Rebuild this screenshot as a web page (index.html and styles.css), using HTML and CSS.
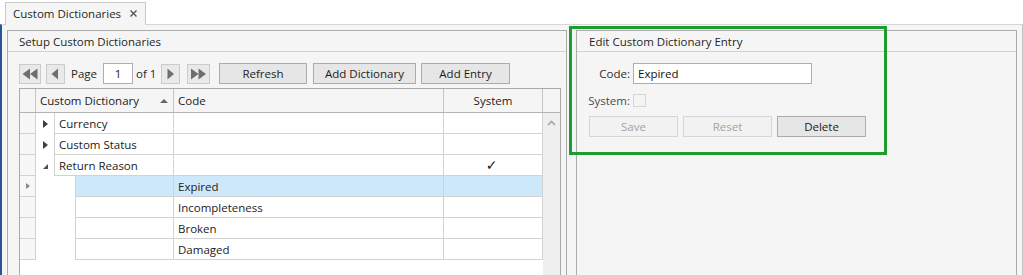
FILE: index.html
```html
<!DOCTYPE html>
<html>
<head>
<meta charset="utf-8">
<title>Custom Dictionaries</title>
<link rel="stylesheet" href="styles.css">
</head>
<body>
<div class="app">
  <div class="tabstrip">
    <div class="tab">
      <span class="tab-title">Custom Dictionaries</span>
      <svg class="tab-close" width="7" height="7" viewBox="0 0 7 7"><path d="M0.5 0.5 L6.5 6.5 M6.5 0.5 L0.5 6.5" stroke="#555" stroke-width="1.4" fill="none"/></svg>
    </div>
  </div>
  <div class="content">
    <section class="panel">
      <div class="panel-header">Setup Custom Dictionaries</div>
      <div class="panel-body">
        <div class="toolbar">
          <button class="nav nav-first"><svg width="22" height="20" viewBox="0 0 22 20"><polygon points="11,4.5 3.5,10 11,15.5" fill="#6e6e6e"/><polygon points="18.5,4.5 11,10 18.5,15.5" fill="#6e6e6e"/></svg></button>
          <button class="nav nav-prev"><svg width="19" height="20" viewBox="0 0 19 20"><polygon points="12,4.5 5.5,10 12,15.5" fill="#6e6e6e"/></svg></button>
          <span class="pager-label pager-page">Page</span>
          <span class="page-input">1</span>
          <span class="pager-label pager-of">of 1</span>
          <button class="nav nav-next"><svg width="19" height="20" viewBox="0 0 19 20"><polygon points="6.5,4.5 13,10 6.5,15.5" fill="#6e6e6e"/></svg></button>
          <button class="nav nav-last"><svg width="23" height="20" viewBox="0 0 23 20"><polygon points="4,4.5 11.5,10 4,15.5" fill="#6e6e6e"/><polygon points="11.5,4.5 19,10 11.5,15.5" fill="#6e6e6e"/></svg></button>
          <button class="btn btn-refresh">Refresh</button>
          <button class="btn btn-adddict">Add Dictionary</button>
          <button class="btn btn-addentry">Add Entry</button>
        </div>
        <div class="grid">
          <div class="grid-main">
            <div class="grid-head">
              <div class="hcell"></div>
              <div class="hcell hcell-sort"><span>Custom Dictionary</span><span class="sort-up"></span></div>
              <div class="hcell">Code</div>
              <div class="hcell hcell-center">System</div>
            </div>
            <div class="row">
              <div class="rh"></div>
              <div class="exp"><span class="tri-right"></span></div>
              <div class="cell cell-dict">Currency</div>
              <div class="cell"></div>
              <div class="cell"></div>
            </div>
            <div class="row">
              <div class="rh"></div>
              <div class="exp"><span class="tri-right"></span></div>
              <div class="cell cell-dict">Custom Status</div>
              <div class="cell"></div>
              <div class="cell"></div>
            </div>
            <div class="row">
              <div class="rh"></div>
              <div class="exp"><span class="tri-open"></span></div>
              <div class="cell cell-dict">Return Reason</div>
              <div class="cell"></div>
              <div class="cell cell-center"><span class="check">✓</span></div>
            </div>
            <div class="row child selected">
              <div class="rh"><span class="tri-current"></span></div>
              <div class="indent"></div>
              <div class="cell cell-first"></div>
              <div class="cell">Expired</div>
              <div class="cell"></div>
            </div>
            <div class="row child">
              <div class="rh"></div>
              <div class="indent"></div>
              <div class="cell cell-first"></div>
              <div class="cell">Incompleteness</div>
              <div class="cell"></div>
            </div>
            <div class="row child">
              <div class="rh"></div>
              <div class="indent"></div>
              <div class="cell cell-first"></div>
              <div class="cell">Broken</div>
              <div class="cell"></div>
            </div>
            <div class="row child">
              <div class="rh"></div>
              <div class="indent"></div>
              <div class="cell cell-first"></div>
              <div class="cell">Damaged</div>
              <div class="cell"></div>
            </div>
          </div>
          <div class="vscroll">
            <div class="vscroll-head"></div>
            <div class="vscroll-track">
              <svg class="vscroll-up" width="9" height="6" viewBox="0 0 9 6"><polyline points="1,5 4.5,1.5 8,5" fill="none" stroke="#a6a6a6" stroke-width="1.6"/></svg>
            </div>
          </div>
        </div>
      </div>
    </section>
    <section class="panel">
      <div class="panel-header panel-header-edit">Edit Custom Dictionary Entry</div>
      <div class="panel-body panel-body-edit">
        <div class="form">
          <label class="form-label">Code:</label>
          <div class="textbox">Expired</div>
          <label class="form-label form-label-muted">System:</label>
          <div class="form-check"><span class="checkbox"></span></div>
        </div>
        <div class="form-actions">
          <button class="btn btn-form" disabled>Save</button>
          <button class="btn btn-form" disabled>Reset</button>
          <button class="btn btn-form">Delete</button>
        </div>
      </div>
    </section>
  </div>
  <div class="highlight"></div>
</div>
</body>
</html>
```

FILE: styles.css
```css
* { box-sizing: border-box; }
html, body { margin: 0; padding: 0; }
body {
  width: 1023px;
  height: 275px;
  overflow: hidden;
  background: #ffffff;
  font-family: "Open Sans", "Noto Sans", "Liberation Sans", sans-serif;
  font-size: 11.5px;
  color: #1c1c1c;
}
.app { position: relative; width: 1023px; height: 275px; }

.tabstrip {
  height: 24px;
  padding-left: 5px;
  display: flex;
  align-items: flex-end;
}
.tab {
  position: relative;
  z-index: 1;
  width: 141px;
  height: 23px;
  margin-bottom: -1px;
  background: #f5f5f5;
  border: 1px solid #c9c9c9;
  border-bottom: none;
  display: flex;
  align-items: center;
  padding-left: 7px;
  padding-bottom: 1px;
  color: #262626;
}
.tab-title { flex: 0 0 auto; }
.tab-close { margin-left: auto; margin-right: 8px; }

.content {
  height: 251px;
  overflow: hidden;
  background: #f5f5f5;
  border-top: 1px solid #d6d6d6;
  border-left: 2px solid #2a5699;
  border-right: 1px solid #c4c4c4;
  padding: 5px 5px 0 5px;
  display: grid;
  grid-template-columns: 560px 441px;
  column-gap: 9px;
  align-items: start;
}

.panel {
  height: 270px;
  border: 1px solid #acacac;
  background: #f5f5f5;
}
.panel-header {
  height: 21px;
  line-height: 21px;
  border-bottom: 1px solid #d2d2d2;
  padding-left: 11px;
  color: #262626;
}
.panel-header-edit { padding-left: 12px; }
.panel-body { padding: 11px 0 0 11px; }
.panel-body-edit { padding-left: 12px; }

.toolbar {
  height: 21px;
  display: flex;
  align-items: center;
}
.nav {
  height: 20px;
  padding: 0;
  margin: 0;
  background: #e9e9e9;
  border: 1px solid #cbcbcb;
  display: flex;
  align-items: center;
  justify-content: center;
  flex: 0 0 auto;
}
.nav svg { display: block; flex: 0 0 auto; }
.nav-first { width: 22px; }
.nav-prev { width: 19px; margin-left: 5px; }
.nav-next { width: 19px; }
.nav-last { width: 23px; margin-left: 7px; }
.pager-label { color: #262626; white-space: nowrap; flex: 0 0 auto; }
.pager-page { width: 32px; margin-left: 6px; }
.pager-of { width: 25px; margin-left: 3px; }
.page-input {
  width: 30px;
  height: 21px;
  flex: 0 0 auto;
  background: #ffffff;
  border: 1px solid #abadb3;
  display: flex;
  align-items: center;
  justify-content: center;
  color: #1c1c1c;
}

.btn {
  height: 21px;
  margin: 0;
  padding: 0;
  background: #e6e6e6;
  border: 1px solid #acacac;
  font-family: inherit;
  font-size: 11.5px;
  color: #1c1c1c;
  line-height: 19px;
  flex: 0 0 auto;
}
.btn-refresh { width: 88px; margin-left: 9px; }
.btn-adddict { width: 103px; margin-left: 6px; }
.btn-addentry { width: 89px; margin-left: 5px; }

.grid {
  margin-top: 4px;
  width: 542px;
  height: 200px;
  border: 1px solid #a9a9a9;
  background: #ffffff;
  display: flex;
}
.grid-main { width: 523px; flex: 0 0 523px; }
.grid-head {
  height: 24px;
  display: grid;
  grid-template-columns: 16px 138px 270px 99px;
  background: #f5f5f5;
  border-bottom: 1px solid #b3b3b3;
}
.hcell {
  border-right: 1px solid #c6c6c6;
  padding-left: 4px;
  display: flex;
  align-items: center;
  color: #1c1c1c;
  white-space: nowrap;
}
.hcell-center { justify-content: center; padding-left: 0; }
.hcell-sort { padding-right: 5px; }
.sort-up {
  margin-left: auto;
  width: 0;
  height: 0;
  border-left: 4px solid transparent;
  border-right: 4px solid transparent;
  border-bottom: 4px solid #666666;
}

.row {
  height: 21px;
  display: grid;
  grid-template-columns: 16px 19px 119px 270px 99px;
}
.row.child { grid-template-columns: 16px 39px 99px 270px 99px; }
.rh {
  background: #f7f7f7;
  border-right: 1px solid #d2d2d2;
  border-bottom: 1px solid #d2d2d2;
  display: flex;
  align-items: center;
  justify-content: center;
}
.exp {
  border-right: 1px solid #d2d2d2;
  display: flex;
  align-items: center;
  justify-content: center;
  padding-left: 1px;
}
.indent { background: #ffffff; }
.cell {
  border-right: 1px solid #d2d2d2;
  border-bottom: 1px solid #d2d2d2;
  padding-left: 4px;
  display: flex;
  align-items: center;
  color: #1c1c1c;
  white-space: nowrap;
}
.cell-center { justify-content: center; padding-left: 0; padding-right: 3px; }
.cell-first { border-left: 1px solid #d2d2d2; }
.row.selected .cell { background: #cde8fb; }
.check { font-family: "DejaVu Sans", sans-serif; font-size: 14px; color: #1a1a1a; line-height: 1; }

.tri-right {
  width: 0; height: 0;
  border-top: 4px solid transparent;
  border-bottom: 4px solid transparent;
  border-left: 5px solid #404040;
}
.tri-open {
  width: 0; height: 0;
  border-left: 5px solid transparent;
  border-bottom: 5px solid #505050;
  margin-top: 2px;
}
.tri-current {
  width: 0; height: 0;
  border-top: 3.5px solid transparent;
  border-bottom: 3.5px solid transparent;
  border-left: 4px solid #8a8a8a;
  margin-left: 1px;
}

.vscroll { width: 17px; flex: 0 0 17px; display: flex; flex-direction: column; }
.vscroll-head {
  height: 24px;
  flex: 0 0 24px;
  background: #f5f5f5;
  border-bottom: 1px solid #b3b3b3;
}
.vscroll-track {
  flex: 1;
  background: #efefef;
  display: flex;
  justify-content: center;
  padding-top: 7px;
}
.vscroll-up { display: block; }

.form {
  display: grid;
  grid-template-columns: 41px 179px;
  grid-template-rows: 21px 18px;
  column-gap: 3px;
  row-gap: 7px;
}
.form-label {
  display: flex;
  align-items: center;
  justify-content: flex-end;
  color: #2e2e2e;
  white-space: nowrap;
}
.form-label-muted { color: #4a4a4a; }
.textbox {
  background: #ffffff;
  border: 1px solid #abadb3;
  padding-left: 4px;
  display: flex;
  align-items: center;
  color: #111;
}
.form-check { display: flex; align-items: center; }
.checkbox {
  width: 13px;
  height: 13px;
  border: 1px solid #d6d6d6;
  background: #f4f4f4;
}
.form-actions {
  margin-top: 7px;
  display: flex;
  column-gap: 5px;
}
.btn-form { width: 89px; }
.btn-form:disabled {
  background: #f2f2f2;
  border-color: #d6d6d6;
  color: #a3a3a3;
}

.highlight {
  position: absolute;
  left: 569px;
  top: 26px;
  width: 318px;
  height: 129px;
  border: 3px solid #1f9c30;
  pointer-events: none;
}
```
